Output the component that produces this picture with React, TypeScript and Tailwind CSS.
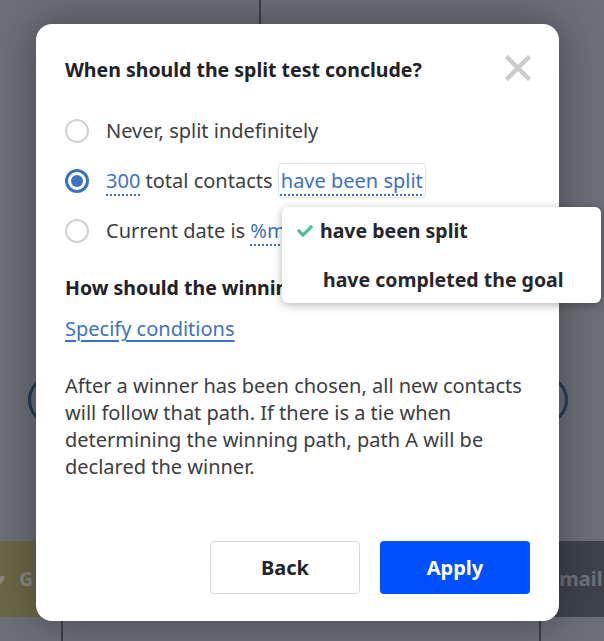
const font = { fontFamily: '"Noto Sans", "Open Sans", sans-serif' };

const Radio = ({ checked }: { checked?: boolean }) =>
  checked ? (
    <span className="flex h-[24px] w-[24px] shrink-0 items-center justify-center rounded-full border-[3px] border-[#3d72c0]">
      <span className="h-[12px] w-[12px] rounded-full bg-[#3d72c0]" />
    </span>
  ) : (
    <span className="h-[24px] w-[24px] shrink-0 rounded-full border-2 border-[#d2d2d2]" />
  );

const Dotted = ({ children }: { children: React.ReactNode }) => (
  <span className="text-[#3d72c0] underline decoration-dotted decoration-[#3d72c0] underline-offset-[6px]">
    {children}
  </span>
);

const CheckMark = () => (
  <svg width="16" height="16" viewBox="0 0 512 512">
    <path
      fill="#4fc08d"
      d="M173.9 439.4l-166.4-166.4c-10-10-10-26.2 0-36.2l36.2-36.2c10-10 26.2-10 36.2 0L192 312.7 432.1 72.6c10-10 26.2-10 36.2 0l36.2 36.2c10 10 10 26.2 0 36.2l-294.4 294.4c-10 10-26.2 10-36.2 0z"
    />
  </svg>
);

export default function App() {
  return (
    <div className="relative h-[641px] w-[604px] overflow-hidden bg-[#6c6f77]" style={font}>
      {/* background canvas */}
      <div className="absolute left-[259px] top-0 h-[30px] w-[2px] bg-[#3b3e48]" />
      <div className="absolute left-[61px] top-[610px] h-[40px] w-[2px] bg-[#3b3e48]" />
      <div className="absolute left-[539px] top-[610px] h-[40px] w-[2px] bg-[#3b3e48]" />
      <div className="absolute left-[-20px] top-[541px] flex h-[76px] w-[80px] items-center gap-[14px] bg-[#6b6846] pl-[14px] text-[19px] font-bold text-[#8a8a80]">
        <span>♥</span>
        <span>G</span>
      </div>
      <div className="absolute left-[520px] top-[541px] flex h-[76px] w-[100px] items-center bg-[#3e424b] pl-[28px] text-[20px] font-bold text-[#6e7178]">
        Email
      </div>
      <div className="absolute left-[28px] top-[375px] h-[50px] w-[50px] rounded-full border-[3px] border-[#1d3b5a]" />
      <div className="absolute left-[518px] top-[375px] h-[50px] w-[50px] rounded-full border-[3px] border-[#1d3b5a]" />

      {/* modal */}
      <div className="absolute left-[36px] top-[24px] flex h-[597px] w-[523px] flex-col rounded-[16px] bg-white px-[29px] pt-[31px] shadow-[0_0_40px_rgba(20,22,28,0.45)]">
        <div className="flex items-start justify-between">
          <h2 className="text-[19.5px] font-bold leading-[30px] text-[#202227]">
            When should the split test conclude?
          </h2>
          <svg className="mr-[-1px]" width="26" height="26" viewBox="0 0 26 26">
            <path d="M3 3 L23 23 M23 3 L3 23" stroke="#cccccc" strokeWidth="4.5" strokeLinecap="square" />
          </svg>
        </div>

        <div className="mt-[34px] flex flex-col gap-[26px] text-[20px] leading-[24px] text-[#3c3d42]">
          <div className="flex items-center gap-[17px]">
            <Radio />
            <span>Never, split indefinitely</span>
          </div>
          <div className="flex items-center gap-[17px]">
            <Radio checked />
            <span className="relative">
              <Dotted>300</Dotted> total contacts{" "}
              <span className="rounded-[4px] border border-[#d9e2f3] px-[2px] py-[3px]">
                <Dotted>have been split</Dotted>
              </span>
              <div className="absolute left-[176px] top-[38px] z-10 flex h-[96px] w-[319px] flex-col rounded-[6px] bg-white text-[19.5px] font-bold leading-[24px] text-[#25272c] shadow-[0_2px_10px_rgba(0,0,0,0.3)]">
                <div className="flex items-center pl-[15px] pt-[12px]">
                  <CheckMark />
                  <span className="ml-[7px]">have been split</span>
                </div>
                <div className="pl-[41px] pt-[25px]">have completed the goal</div>
              </div>
            </span>
          </div>
          <div className="flex items-center gap-[17px]">
            <Radio />
            <span>
              Current date is <Dotted>%m/%d/%Y</Dotted>
            </span>
          </div>
        </div>

        <h3 className="mt-[33px] text-[19.5px] font-bold leading-[24px] text-[#202227]">
          How should the winning path be determined?
        </h3>
        <a className="mt-[17px] w-fit text-[20px] leading-[24px] text-[#3d72c0] underline underline-offset-[4px]">
          Specify conditions
        </a>

        <p className="mt-[31px] text-[20px] leading-[27px] text-[#3c3d42]">
          After a winner has been chosen, all new contacts will follow that path. If there is a tie when
          determining the winning path, path A will be declared the winner.
        </p>

        <div className="mt-auto mb-[27px] flex justify-end gap-[20px]">
          <button className="h-[53px] w-[150px] rounded-[4px] border border-[#d3d8e3] bg-white text-[20px] font-bold text-[#23252a]">
            Back
          </button>
          <button className="h-[53px] w-[150px] rounded-[4px] bg-[#0050ff] text-[20px] font-bold text-white">
            Apply
          </button>
        </div>
      </div>
    </div>
  );
}
